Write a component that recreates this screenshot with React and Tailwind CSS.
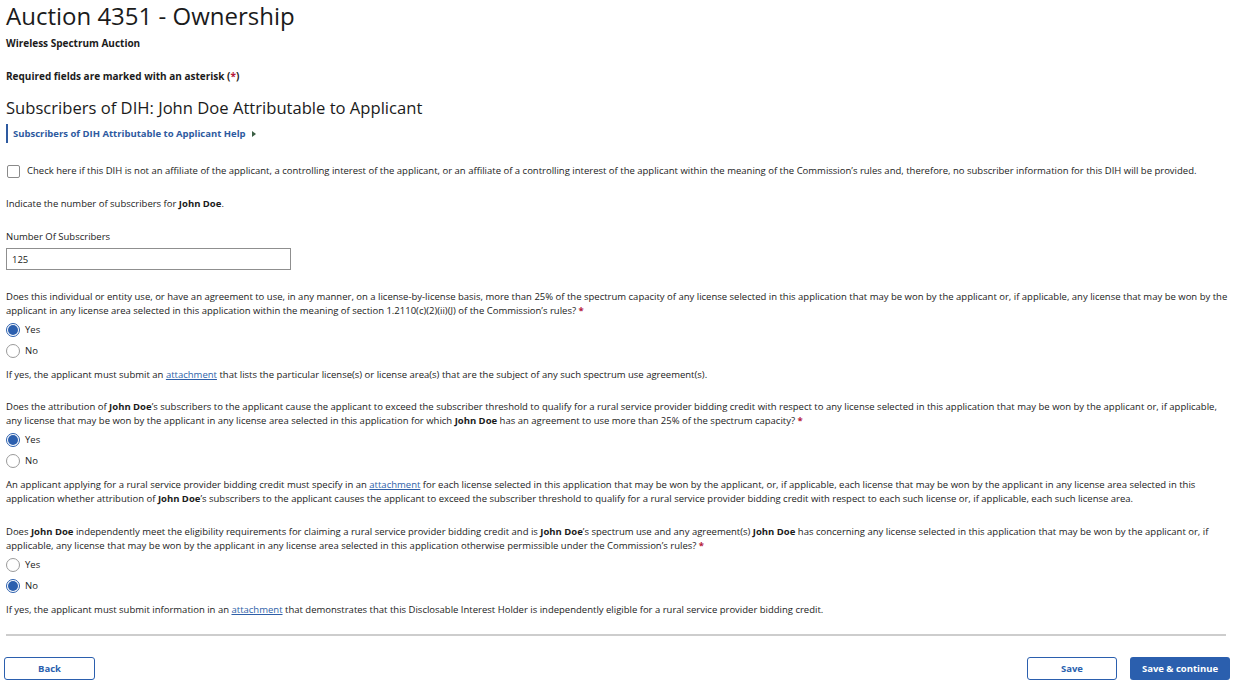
import { useState } from "react"

function Req() {
  return <span className="text-[#b51a3c] font-bold"> *</span>
}

function Radio({ name, label, checked, onChange }) {
  return (
    <label className="flex items-center h-[21px] gap-[5px] cursor-pointer select-none">
      <span
        className={`w-[14px] h-[14px] rounded-full border flex items-center justify-center ${
          checked ? "border-[#2b5fae] bg-white" : "border-[#9a9a9a] bg-white"
        }`}
      >
        {checked && <span className="w-[10px] h-[10px] rounded-full bg-[#2b5fae]" />}
      </span>
      <input type="radio" name={name} checked={checked} onChange={onChange} className="hidden" />
      <span>{label}</span>
    </label>
  )
}

function YesNo({ name, value, setValue }) {
  return (
    <div>
      <Radio name={name} label="Yes" checked={value === "yes"} onChange={() => setValue("yes")} />
      <Radio name={name} label="No" checked={value === "no"} onChange={() => setValue("no")} />
    </div>
  )
}

function Attachment() {
  return <a href="#" className="text-[#2e5fa8] underline">attachment</a>
}

export default function App() {
  const [notAffiliate, setNotAffiliate] = useState(false)
  const [count, setCount] = useState("125")
  const [q1, setQ1] = useState("yes")
  const [q2, setQ2] = useState("yes")
  const [q3, setQ3] = useState("no")

  return (
    <div className="font-['Open_Sans',sans-serif] text-[#1b1b1b] text-[9.5px] leading-[14px] pl-[6px] pr-[6px] bg-white min-h-[686px]">

      {/* Header */}
      <h1 className="text-[24px] leading-[32px] font-normal">Auction 4351 - Ownership</h1>
      <p className="mt-[4px] font-bold text-[10px]">Wireless Spectrum Auction</p>
      <p className="mt-[19px] font-bold text-[10px]">
        Required fields are marked with an asterisk (<span className="text-[#b51a3c]">*</span>)
      </p>

      <h2 className="mt-[13px] text-[16.6px] leading-[24px] font-normal">
        Subscribers of DIH: John Doe Attributable to Applicant
      </h2>

      <div className="mt-[4px] border-l-2 border-[#2e5aa0] pl-[5px] py-[2.5px] flex items-center gap-[6px]">
        <a href="#" className="font-bold text-[#2e5aa0]">Subscribers of DIH Attributable to Applicant Help</a>
        <svg width="4" height="6" viewBox="0 0 4 6">
          <path d="M0 0 L4 3 L0 6 Z" fill="#3b5e44" />
        </svg>
      </div>

      {/* Affiliate checkbox */}
      <label className="mt-[21px] flex items-center gap-[7px] cursor-pointer select-none">
        <span
          className={`ml-[1px] w-[13px] h-[13px] rounded-[2px] border flex items-center justify-center ${
            notAffiliate ? "bg-[#2b5fae] border-[#2b5fae]" : "bg-white border-[#8a8a8a]"
          }`}
        >
          {notAffiliate && <span className="text-white text-[9px] leading-none">✓</span>}
        </span>
        <input type="checkbox" className="hidden" checked={notAffiliate} onChange={() => setNotAffiliate(v => !v)} />
        <span>
          Check here if this DIH is not an affiliate of the applicant, a controlling interest of the applicant, or an affiliate of a controlling interest of the applicant within the meaning of the Commission’s rules and, therefore, no subscriber information for this DIH will be provided.
        </span>
      </label>

      <p className="mt-[19px]">
        Indicate the number of subscribers for <b>John Doe</b>.
      </p>

      {/* Number input */}
      <p className="mt-[19px]">Number Of Subscribers</p>
      <input
        value={count}
        onChange={e => setCount(e.target.value)}
        className="mt-[4px] block w-[285px] h-[22px] border border-[#8f8f8f] px-[5px] text-[9.5px] outline-none"
      />

      {/* Question 1 */}
      <p className="mt-[20px]">
        Does this individual or entity use, or have an agreement to use, in any manner, on a license-by-license basis, more than 25% of the spectrum capacity of any license selected in this application that may be won by the applicant or, if applicable, any license that may be won by the applicant in any license area selected in this application within the meaning of section 1.2110(c)(2)(ii)(J) of the Commission’s rules?<Req />
      </p>
      <div className="mt-[1px]">
        <YesNo name="q1" value={q1} setValue={setQ1} />
      </div>
      <p className="mt-[7px]">
        If yes, the applicant must submit an <Attachment /> that lists the particular license(s) or license area(s) that are the subject of any such spectrum use agreement(s).
      </p>

      {/* Question 2 */}
      <p className="mt-[18px]">
        Does the attribution of <b>John Doe</b>’s subscribers to the applicant cause the applicant to exceed the subscriber threshold to qualify for a rural service provider bidding credit with respect to any license selected in this application that may be won by the applicant or, if applicable, any license that may be won by the applicant in any license area selected in this application for which <b>John Doe</b> has an agreement to use more than 25% of the spectrum capacity?<Req />
      </p>
      <div className="mt-[1px]">
        <YesNo name="q2" value={q2} setValue={setQ2} />
      </div>
      <p className="mt-[7px]">
        An applicant applying for a rural service provider bidding credit must specify in an <Attachment /> for each license selected in this application that may be won by the applicant, or, if applicable, each license that may be won by the applicant in any license area selected in this application whether attribution of <b>John Doe</b>’s subscribers to the applicant causes the applicant to exceed the subscriber threshold to qualify for a rural service provider bidding credit with respect to each such license or, if applicable, each such license area.
      </p>

      {/* Question 3 */}
      <p className="mt-[19px]">
        Does <b>John Doe</b> independently meet the eligibility requirements for claiming a rural service provider bidding credit and is <b>John Doe</b>’s spectrum use and any agreement(s) <b>John Doe</b> has concerning any license selected in this application that may be won by the applicant or, if applicable, any license that may be won by the applicant in any license area selected in this application otherwise permissible under the Commission’s rules?<Req />
      </p>
      <div className="mt-[1px]">
        <YesNo name="q3" value={q3} setValue={setQ3} />
      </div>
      <p className="mt-[7px]">
        If yes, the applicant must submit information in an <Attachment /> that demonstrates that this Disclosable Interest Holder is independently eligible for a rural service provider bidding credit.
      </p>

      <div className="mt-[17px] mr-[4px] h-[2px] bg-[#cdcdcd]" />

      {/* Footer buttons */}
      <div className="mt-[21px] -ml-[2px] flex items-center">
        <button className="w-[91px] h-[23px] rounded-[3px] border border-[#2b5fae] bg-white text-[#2b5fae] font-bold text-[9.5px]">
          Back
        </button>
        <div className="flex-1" />
        <button className="w-[90px] h-[23px] rounded-[3px] border border-[#2b5fae] bg-white text-[#2b5fae] font-bold text-[9.5px]">
          Save
        </button>
        <button className="ml-[13px] w-[100px] h-[23px] rounded-[3px] bg-[#2b5fae] text-white font-bold text-[9.5px]">
          Save &amp; continue
        </button>
      </div>
    </div>
  )
}
